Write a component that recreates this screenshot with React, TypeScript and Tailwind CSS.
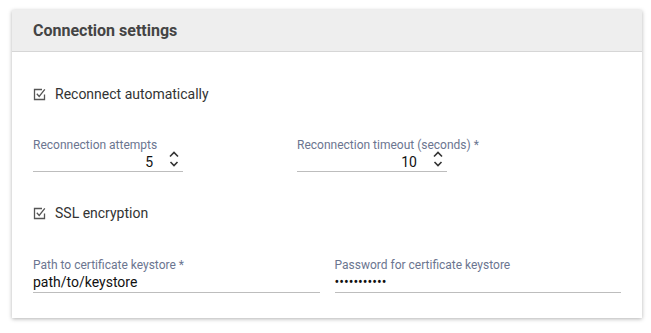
import React from "react";

const CheckIcon = () => (
  <svg width="13" height="13" viewBox="0 0 13 13" fill="none" stroke="#555" strokeWidth="1.3">
    <path d="M9 1.5H1.5v10h10V6.5" />
    <path d="M3.8 5.8l2.4 2.6 5.6-7" />
  </svg>
);

const Spinner = () => (
  <svg width="12" height="18" viewBox="0 0 12 18" fill="none" stroke="#333" strokeWidth="1.6">
    <path d="M2 6.5l4-4 4 4" />
    <path d="M2.5 12l3.5 3.5 3.5-3.5" />
  </svg>
);

const CheckRow = ({ label }: { label: string }) => (
  <div className="flex items-center gap-[9px] h-[20px]">
    <CheckIcon />
    <span className="text-[14px] text-[#333]">{label}</span>
  </div>
);

const NumberField = ({ label, value }: { label: string; value: string }) => (
  <div className="w-[150px]">
    <div className="text-[12px] leading-[14px] text-[#6b7590] whitespace-nowrap">{label}</div>
    <div className="flex items-center justify-end h-[20px] border-b border-[#bdbdbd] pb-[1px]">
      <span className="text-[14px] text-[#111] mr-[15px] mt-[2px]">{value}</span>
      <span className="mr-[3px] -mt-[5px]">
        <Spinner />
      </span>
    </div>
  </div>
);

const TextField = ({ label, value }: { label: string; value: string }) => (
  <div className="flex-1">
    <div className="text-[12px] leading-[14px] text-[#6b7590]">{label}</div>
    <div className="h-[21px] flex items-center border-b border-[#bdbdbd] text-[14px] text-[#111]">
      {value}
    </div>
  </div>
);

export default function App() {
  return (
    <div className="w-[651px] h-[333px] bg-white pt-[10px] pl-[12px]" style={{ fontFamily: "Roboto, sans-serif" }}>
      <div className="w-[630px] h-[308px] bg-white shadow-[0_1px_4px_rgba(0,0,0,0.3)]">
        <div className="h-[42px] bg-[#eeeeee] border-b border-[#d6d6d6] flex items-center px-[21px]">
          <span className="text-[16px] font-bold text-[#444]">Connection settings</span>
        </div>
        <div className="px-[21px] pt-[32px]">
          <CheckRow label="Reconnect automatically" />
          <div className="flex gap-[114px] mt-[34px]">
            <NumberField label="Reconnection attempts" value="5" />
            <NumberField label="Reconnection timeout (seconds) *" value="10" />
          </div>
          <div className="mt-[31px]">
            <CheckRow label="SSL encryption" />
          </div>
          <div className="flex gap-[15px] mt-[35px]">
            <TextField label="Path to certificate keystore *" value="path/to/keystore" />
            <TextField label="Password for certificate keystore" value="•••••••••••" />
          </div>
        </div>
      </div>
    </div>
  );
}
